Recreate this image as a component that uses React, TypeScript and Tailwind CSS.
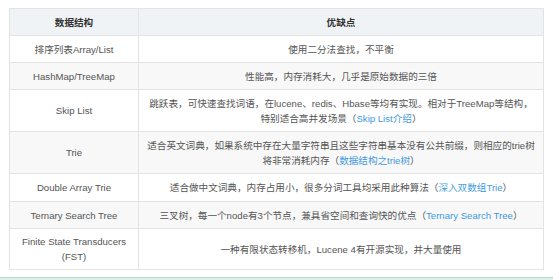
const rows: { name: React.ReactNode; desc: React.ReactNode; h: string }[] = [
  { name: '排序列表Array/List', desc: '使用二分法查找，不平衡', h: 'h-[27px]' },
  { name: 'HashMap/TreeMap', desc: '性能高，内存消耗大，几乎是原始数据的三倍', h: 'h-[27px]' },
  {
    name: 'Skip List',
    h: 'h-[42px]',
    desc: (
      <>
        跳跃表，可快速查找词语，在lucene、redis、Hbase等均有实现。相对于TreeMap等结构，
        <br />
        特别适合高并发场景（<a className="text-[#3f9ae0]">Skip List介绍</a>）
      </>
    ),
  },
  {
    name: 'Trie',
    h: 'h-[42px]',
    desc: (
      <>
        适合英文词典，如果系统中存在大量字符串且这些字符串基本没有公共前缀，则相应的trie树
        <br />
        将非常消耗内存（<a className="text-[#3f9ae0]">数据结构之trie树</a>）
      </>
    ),
  },
  {
    name: 'Double Array Trie',
    h: 'h-[28px]',
    desc: (
      <>
        适合做中文词典，内存占用小，很多分词工具均采用此种算法（<a className="text-[#3f9ae0]">深入双数组Trie</a>）
      </>
    ),
  },
  {
    name: 'Ternary Search Tree',
    h: 'h-[27px]',
    desc: (
      <>
        三叉树，每一个node有3个节点，兼具省空间和查询快的优点（<a className="text-[#3f9ae0]">Ternary Search Tree</a>）
      </>
    ),
  },
  {
    name: (
      <>
        Finite State Transducers
        <br />
        (FST)
      </>
    ),
    h: 'h-[41px]',
    desc: '一种有限状态转移机，Lucene 4有开源实现，并大量使用',
  },
]

const App = () => {
  return (
    <div className="w-[553px] h-[280px] bg-white overflow-hidden flex flex-col">
      <div className="pt-[8px] pl-[9px] h-[277px]">
        <table className="border-collapse w-[535px] text-[9.6px] leading-[15px] text-[#555] font-['Liberation_Sans','Noto_Sans_CJK_SC',sans-serif] table-fixed">
          <colgroup>
            <col className="w-[129px]" />
            <col />
          </colgroup>
          <thead>
            <tr className="bg-[#eff3f6] h-[27px]">
              <th className="border border-[#e3e3e3] px-[6px] font-bold text-[#333]">数据结构</th>
              <th className="border border-[#e3e3e3] px-[6px] font-bold text-[#333]">优缺点</th>
            </tr>
          </thead>
          <tbody>
            {rows.map((row, index) => (
              <tr key={index} className={`${row.h} ${index % 2 === 1 ? 'bg-[#f8f8f8]' : 'bg-white'}`}>
                <td className="border border-[#e3e3e3] px-[6px] py-0 text-center">{row.name}</td>
                <td className="border border-[#e3e3e3] px-[3px] py-0 text-center whitespace-nowrap">{row.desc}</td>
              </tr>
            ))}
          </tbody>
        </table>
      </div>
      <div className="h-[3px] border-t border-[#b8d8cc] bg-[#dcefe8]" />
    </div>
  )
}

export default App
